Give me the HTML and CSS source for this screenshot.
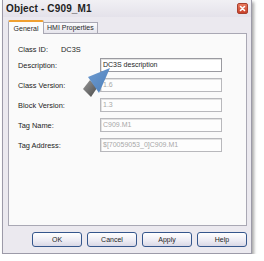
FILE: index.html
```html
<!DOCTYPE html>
<html>
<head>
<meta charset="utf-8">
<link rel="stylesheet" href="styles.css">
</head>
<body>
<div class="window">
  <div class="titlebar">
    <span class="title">Object - C909_M1</span>
    <span class="close"><svg width="9" height="9" viewBox="0 0 9 9"><path d="M2.5 2.5 L6.5 6.5 M6.5 2.5 L2.5 6.5" stroke="#fff" stroke-width="1.6" stroke-linecap="round"/></svg></span>
  </div>
  <div class="tabs">
    <div class="tab active">General</div>
    <div class="tab">HMI Properties</div>
  </div>
  <div class="panel">
    <div class="row first"><span class="label">Class ID:</span><span class="value">DC3S</span></div>
    <div class="row"><span class="label">Description:</span><div class="input edit">DC3S description</div></div>
    <div class="row"><span class="label">Class Version:</span><div class="input">1.6</div></div>
    <div class="row"><span class="label">Block Version:</span><div class="input">1.3</div></div>
    <div class="row"><span class="label">Tag Name:</span><div class="input">C909.M1</div></div>
    <div class="row"><span class="label">Tag Address:</span><div class="input">$[70059053_0]C909.M1</div></div>
  </div>
  <div class="buttons">
    <div class="btn">OK</div>
    <div class="btn">Cancel</div>
    <div class="btn">Apply</div>
    <div class="btn">Help</div>
  </div>
  <svg class="arrow" width="32" height="36" viewBox="0 0 32 36">
    <defs>
      <linearGradient id="g" x1="0" y1="0" x2="1" y2="1">
        <stop offset="0" stop-color="#9a9a9a"/>
        <stop offset="1" stop-color="#4a4a4a"/>
      </linearGradient>
      <linearGradient id="b" x1="0" y1="0" x2="1" y2="1">
        <stop offset="0" stop-color="#6e9bd0"/>
        <stop offset="1" stop-color="#4d7fba"/>
      </linearGradient>
    </defs>
    <polygon points="10,16 17,24 11,33 3,25" fill="url(#g)"/>
    <polygon points="30,4 8,13 19,29" fill="url(#b)"/>
  </svg>
</div>
</body>
</html>
```

FILE: styles.css
```css
html, body {
  margin: 0;
  padding: 0;
  background: #ffffff;
}
body {
  font-family: "Liberation Sans", Arial, sans-serif;
  color: #2a2a2a;
}
.window {
  position: relative;
  margin-left: 2px;
  width: 248px;
  height: 253px;
  background: #ebe9ef;
  border: 1px solid #9c9aa8;
  border-top: none;
  box-shadow: 2px 2px 3px rgba(0,0,0,0.35);
}
.titlebar {
  height: 17px;
  display: flex;
  align-items: center;
  justify-content: space-between;
  padding: 0 3px 0 3px;
  background: linear-gradient(#f1f0f4, #e4e2ea);
}
.title {
  font-weight: bold;
  font-size: 10px;
  color: #1e1e1e;
  letter-spacing: 0.15px;
}
.close {
  width: 9px;
  height: 9px;
  margin-top: -1px;
  background: linear-gradient(#e87a5e, #c9402a);
  border: 1px solid #a8402e;
  border-radius: 2px;
  display: flex;
}
.tabs {
  display: flex;
  align-items: flex-end;
  margin-top: 3px;
  padding-left: 5px;
  height: 13px;
}
.tab {
  font-size: 7px;
  height: 10px;
  line-height: 10px;
  padding: 0 3px;
  background: linear-gradient(#fbfbfd, #e6e5ec);
  border: 1px solid #a9a8b4;
  border-bottom: none;
  color: #2a2a2a;
}
.tab.active {
  height: 12px;
  line-height: 13px;
  width: 28px;
  padding: 0 3px;
  background: #fbfbfb;
  border-top: 2px solid #f0a030;
  border-radius: 2px 2px 0 0;
  position: relative;
  z-index: 1;
  margin-bottom: -1px;
  text-align: center;
}
.tab:not(.active) {
  border-left: none;
  width: 47px;
}
.panel {
  margin-left: 5px;
  width: 239px;
  height: 193px;
  background: #fafafa;
  border: 1px solid #a9a8b4;
  display: flex;
  flex-direction: column;
  padding-top: 10px;
  box-sizing: border-box;
}
.row {
  display: flex;
  align-items: center;
  height: 14px;
  margin-bottom: 6px;
  font-size: 7.4px;
  color: #222;
}
.row.first {
  height: 10px;
  margin-bottom: 4px;
}
.label {
  width: 91px;
  padding-left: 9px;
  box-sizing: border-box;
  flex: none;
}
.row.first .label {
  width: 52px;
}
.value {
  color: #222;
}
.input {
  width: 122px;
  height: 14px;
  box-sizing: border-box;
  border: 1px solid #b8b8bc;
  box-shadow: inset 1px 1px 0 #e2e2e2;
  background: #fdfdfd;
  color: #a8a8a8;
  font-size: 7px;
  line-height: 12px;
  padding-left: 2px;
  white-space: nowrap;
  overflow: hidden;
}
.input.edit {
  color: #1e1e1e;
  border-color: #9a9aa0;
  background: #ffffff;
}
.buttons {
  display: flex;
  justify-content: flex-end;
  gap: 5px;
  margin-top: 6px;
  padding-right: 4px;
}
.btn {
  width: 50px;
  height: 15px;
  box-sizing: border-box;
  border: 1px solid #35568c;
  border-radius: 3px;
  background: linear-gradient(#ffffff, #ecebf3 60%, #d9d8e6);
  font-size: 7px;
  line-height: 13px;
  text-align: center;
  color: #1e1e1e;
}
.arrow {
  position: absolute;
  left: 77px;
  top: 64px;
}
```
